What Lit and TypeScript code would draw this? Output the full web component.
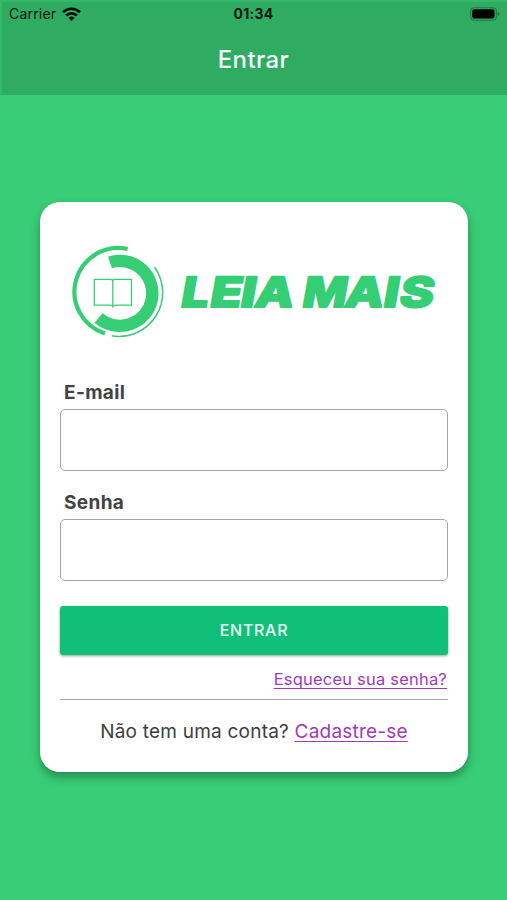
import { LitElement, html, svg, css } from "lit";
import { customElement, property } from "lit/decorators.js";

@customElement("status-bar")
class StatusBar extends LitElement {
  static styles = css`
    :host { display: grid; grid-template-columns: 1fr auto 1fr; align-items: center; height: 27px; box-sizing: border-box; padding: 0 7px 0 9px; color: #06170d; font-size: 14px; }
    .left { display: flex; align-items: center; gap: 6px; letter-spacing: 0.2px; }
    .time { font-weight: 700; font-size: 14px; letter-spacing: 0.3px; margin-right: 2px; }
    .battery { justify-self: end; }
    svg { display: block; }
  `;
  render() {
    return html`
      <div class="left"><span>Carrier</span>
        <svg width="19" height="14" viewBox="0 0 19 14" fill="none" stroke="#020a05" stroke-width="2.7">
          <path d="M1 5.2A12.2 12.2 0 0 1 18 5.2" />
          <path d="M4.1 8.5A7.8 7.8 0 0 1 14.9 8.5" />
          <path d="M9.5 13.7L6.5 10.9A4.4 4.4 0 0 1 12.5 10.9Z" fill="#020a05" stroke="none" />
        </svg>
      </div>
      <span class="time">01:34</span>
      <svg class="battery" width="30" height="14" viewBox="0 0 30 14">
        <rect x="0.7" y="0.7" width="25.6" height="12.6" rx="3.5" fill="none" stroke="#1f7943" stroke-width="1.1" />
        <rect x="2.2" y="2.3" width="22.3" height="9.2" rx="2" fill="#000" />
        <path d="M27.6 5v4.2c1.4-.4 1.9-1.2 1.9-2.1s-.5-1.7-1.9-2.1z" fill="#1f7943" />
      </svg>`;
  }
}

@customElement("brand-logo")
class BrandLogo extends LitElement {
  static styles = css`
    :host { display: block; }
    svg { display: block; width: 100%; height: 100px; }
    .name { font: 800 41.5px Inter, "Liberation Sans", sans-serif; font-optical-sizing: none; fill: #35ce75; stroke: #35ce75; stroke-width: 2.2; stroke-linejoin: round; }
  `;
  // Glyph, left edge on the baseline, advance width
  private letters: [string, number, number][] = [
    ["L", -1, 27.5], ["E", 28, 31.5], ["I", 58.5, 15], ["A", 73, 38.5],
    ["M", 120.5, 44], ["A", 163, 38.5], ["I", 201.5, 15], ["S", 217.5, 34],
  ];
  render() {
    return html`
      <svg viewBox="60 242 388 100" fill="none" stroke="#35ce75">
        <path d="M127.6 249A43.78 43.78 0 0 0 105 333.5" stroke-width="4.2" />
        <path d="M110 262.4A32.5 32.5 0 1 1 98.6 318" stroke-width="12.4" />
        <path d="M154.6 267.2A43.8 43.8 0 0 1 111.8 335.8" stroke-width="1.5" />
        <path d="M112.8 280.5Q112 279.4 110.5 279.4H94.3V305.2H110.5Q112 305.2 112.8 306.7Q113.6 305.2 115.1 305.2H131.5V279.4H115.1Q113.6 279.4 112.8 280.5V306" stroke-width="1.3" />
        <g class="name" transform="translate(180.5 307.2) skewX(-10)">
          ${this.letters.map(([c, x, w]) => svg`<text x=${x} y="0" textLength=${w} lengthAdjust="spacingAndGlyphs">${c}</text>`)}
        </g>
      </svg>`;
  }
}

@customElement("text-field")
class TextField extends LitElement {
  @property() label = "";
  @property() type = "text";
  static styles = css`
    :host { display: block; }
    label { display: block; height: 33px; line-height: 34px; padding-left: 4px; color: #424242; font-size: 19px; font-weight: 700; letter-spacing: 0.35px; }
    input { display: block; width: 100%; height: 62px; box-sizing: border-box; margin: 0; padding: 0 12px; border: 1px solid #a5a5a5; border-radius: 5px; background: #fff; font: inherit; outline: none; }
  `;
  render() {
    return html`<label for="f">${this.label}</label><input id="f" type=${this.type} />`;
  }
}

@customElement("app-root")
class AppRoot extends LitElement {
  static styles = css`
    :host { display: flex; flex-direction: column; height: 900px; background: #3acd78; font-family: Inter, "Liberation Sans", sans-serif; overflow: hidden; }
    header { height: 95px; box-sizing: border-box; background: #2fab62; box-shadow: inset 2px 2px 1px #34b96b; flex: none; }
    h1 { margin: 0; height: 64px; line-height: 66px; text-align: center; color: #f5fff9; font-size: 24px; font-weight: 500; letter-spacing: 0.4px; }
    .card { margin: 107px 39px 0 40px; height: 570px; box-sizing: border-box; padding: 40px 20px 0; border-radius: 20px; background: #fff; box-shadow: 0 5px 10px rgba(0, 50, 20, 0.4); display: flex; flex-direction: column; }
    brand-logo { margin-bottom: 34px; }
    text-field { margin-bottom: 15px; }
    button { flex: none; height: 49px; margin-top: 10px; padding-bottom: 3px; border: 0; border-radius: 3px; background: #10c078; color: #e9fff4; font: 500 16px Inter, "Liberation Sans", sans-serif; letter-spacing: 0.7px; box-shadow: 0 1px 3px rgba(0, 0, 0, 0.4); }
    a { color: #a23bb5; text-decoration: underline; text-decoration-thickness: 1px; text-underline-offset: 3px; text-decoration-skip-ink: none; }
    .forgot { height: 45px; line-height: 49px; box-sizing: border-box; border-bottom: 1px solid #a8a8a8; padding-right: 1px; text-align: right; font-size: 16.5px; letter-spacing: 0.2px; }
    .signup { margin: 0; height: 62px; line-height: 63px; text-align: center; color: #3d3d3d; font-size: 19px; letter-spacing: 0.22px; }
  `;
  render() {
    return html`
      <header><status-bar></status-bar><h1>Entrar</h1></header>
      <main class="card">
        <brand-logo></brand-logo>
        <text-field label="E-mail" type="email"></text-field>
        <text-field label="Senha" type="password"></text-field>
        <button>ENTRAR</button>
        <div class="forgot"><a>Esqueceu sua senha?</a></div>
        <p class="signup">Não tem uma conta? <a>Cadastre-se</a></p>
      </main>`;
  }
}
